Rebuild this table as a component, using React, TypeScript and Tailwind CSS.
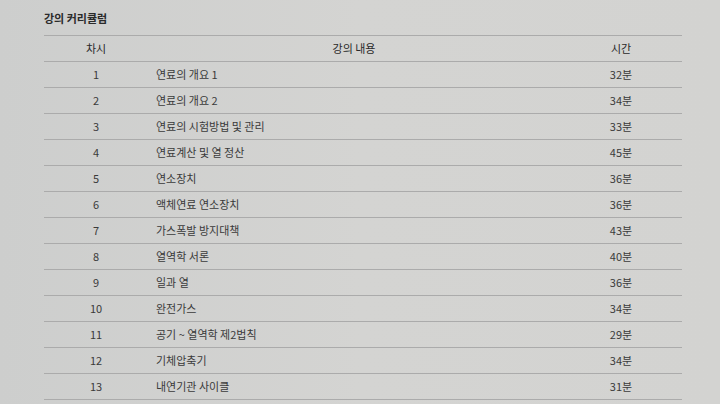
import React from "react";

const rows: [string, string, string][] = [
  ["1", "연료의 개요 1", "32분"],
  ["2", "연료의 개요 2", "34분"],
  ["3", "연료의 시험방법 및 관리", "33분"],
  ["4", "연료계산 및 열 정산", "45분"],
  ["5", "연소장치", "36분"],
  ["6", "액체연료 연소장치", "36분"],
  ["7", "가스폭발 방지대책", "43분"],
  ["8", "열역학 서론", "40분"],
  ["9", "일과 열", "36분"],
  ["10", "완전가스", "34분"],
  ["11", "공기 ~ 열역학 제2법칙", "29분"],
  ["12", "기체압축기", "34분"],
  ["13", "내연기관 사이클", "31분"],
];

export default function App() {
  return (
    <div
      className="w-[720px] h-[404px] overflow-hidden bg-gradient-to-r from-[#cdcecd] via-[#d4d4d2] to-[#d3d3d1] text-[#3a3a3a]"
      style={{ fontFamily: '"Noto Sans CJK KR", "Noto Sans", sans-serif' }}
    >
      <div className="pl-[44px] w-[682px]">
        <div className="h-[35px] pt-[10px] text-[11px] leading-[16px] font-bold text-[#2a2a2a]">
          강의 커리큘럼
        </div>
        <div className="border-t border-[#ababab]">
          <div className="grid grid-cols-[104px_412px_122px] h-[26px] border-b border-[#ababab] items-center text-[11px] text-[#2a2a2a]">
            <div className="text-center">차시</div>
            <div className="text-center">강의 내용</div>
            <div className="text-center">시간</div>
          </div>
          {rows.map(([n, t, m]) => (
            <div
              key={n}
              className="grid grid-cols-[104px_412px_122px] h-[26px] border-b border-[#ababab] items-center text-[11px]"
            >
              <div className="text-center">{n}</div>
              <div className="pl-[8px]">{t}</div>
              <div className="text-center">{m}</div>
            </div>
          ))}
        </div>
      </div>
    </div>
  );
}
